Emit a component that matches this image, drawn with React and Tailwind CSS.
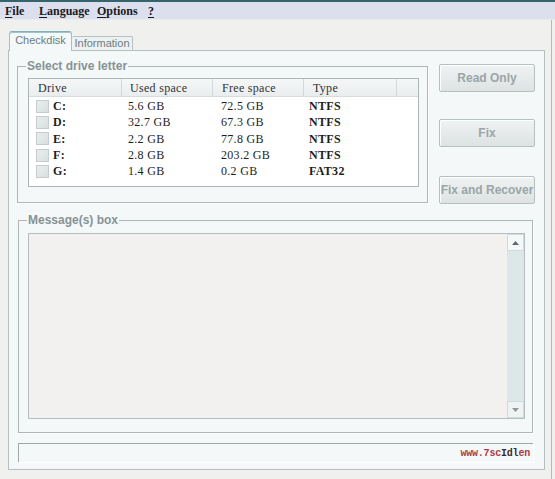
import React from "react";

const drives = [
  { letter: "C:", used: "5.6 GB", free: "72.5 GB", type: "NTFS" },
  { letter: "D:", used: "32.7 GB", free: "67.3 GB", type: "NTFS" },
  { letter: "E:", used: "2.2 GB", free: "77.8 GB", type: "NTFS" },
  { letter: "F:", used: "2.8 GB", free: "203.2 GB", type: "NTFS" },
  { letter: "G:", used: "1.4 GB", free: "0.2 GB", type: "FAT32" },
];

const listFont = { fontFamily: '"Liberation Serif", "Times New Roman", serif' };

function MenuItem({ label, width }) {
  return (
    <span className={`${width} shrink-0`}>
      <span className="underline underline-offset-2">{label[0]}</span>
      {label.slice(1)}
    </span>
  );
}

function ActionButton({ children, className = "" }) {
  return (
    <button
      className={`h-[28px] w-[96px] shrink-0 rounded-[2px] border border-[#b7c0c1] bg-linear-to-b from-[#f0f3f3] to-[#dde2e2] text-[12px] font-bold text-[#9aa6a7] shadow-[inset_1px_1px_0_#ffffff] ${className}`}
    >
      {children}
    </button>
  );
}

function Arrow({ up }) {
  return (
    <svg width="7" height="4" viewBox="0 0 7 4">
      {up ? <path d="M0 4 L3.5 0 L7 4 Z" fill="#5f6b6c" /> : <path d="M0 0 L3.5 4 L7 0 Z" fill="#8d9899" />}
    </svg>
  );
}

export default function App() {
  return (
    <div
      className="flex h-[479px] w-[555px] flex-col overflow-hidden bg-[#f0f0ee]"
      style={{ fontFamily: '"Liberation Sans", Arial, sans-serif' }}
    >
      <div className="h-[2px] shrink-0 bg-[#35646a]" />
      {/* menu bar */}
      <div
        className="flex h-[18px] shrink-0 items-center border-b border-[#e9ebf3] bg-[#dce0ee] pl-[5px] text-[12px] font-bold text-[#1a1a1a]"
        style={listFont}
      >
        <MenuItem label="File" width="w-[34px]" />
        <MenuItem label="Language" width="w-[58px]" />
        <MenuItem label="Options" width="w-[51px]" />
        <MenuItem label="?" width="w-[10px]" />
      </div>

      <div className="flex flex-1">
        <div className="flex w-[551px] flex-col pl-[8px] pt-[11px]">
          {/* tabs */}
          <div className="flex h-[19px] items-end pl-[1px] text-[11px] text-[#6c7c82]">
            <div className="relative z-10 -mb-px flex h-[20px] w-[63px] items-center justify-center rounded-t-[3px] border border-b-0 border-[#b0bcbe] border-t-[#7fb1b8] bg-[#f4f8f8] pb-[2px] shadow-[inset_0_1px_0_#9cc6cc]">
              Checkdisk
            </div>
            <div className="flex h-[14px] w-[61px] items-center justify-center rounded-t-[2px] border border-b-0 border-l-0 border-[#b7c1c2] bg-[#eef1f1]">
              Information
            </div>
          </div>

          {/* tab page */}
          <div className="flex h-[420px] w-[537px] flex-col border border-[#b4bfc0] bg-[#f4f8f8] px-[8px] pt-[8px]">
            <div className="flex">
              <fieldset className="h-[144px] w-[411px] shrink-0 border border-[#aeb7b8] shadow-[1px_1px_0_#ffffff]">
                <legend className="ml-[8px] px-[1px] text-[12px] font-bold leading-[14px] text-[#869394]">
                  Select drive letter
                </legend>
                <div className="pl-[10px] pt-[5px]">
                  {/* drive list */}
                  <div className="h-[109px] w-[391px] border border-[#abb5b6] bg-white">
                    <div
                      className="flex h-[18px] border-b border-[#d6dcdc] bg-linear-to-b from-[#f6f8f8] to-[#e9eded] text-[12px] tracking-[0.3px] text-[#333]"
                      style={listFont}
                    >
                      <div className="flex w-[93px] items-center border-r border-[#d3d9d9] pl-[9px]">Drive</div>
                      <div className="flex w-[91px] items-center border-r border-[#d3d9d9] pl-[8px]">Used space</div>
                      <div className="flex w-[91px] items-center border-r border-[#d3d9d9] pl-[9px]">Free space</div>
                      <div className="flex w-[93px] items-center border-r border-[#d3d9d9] pl-[9px]">Type</div>
                      <div className="flex-1" />
                    </div>
                    <div className="pt-[1px] text-[12px] tracking-[0.3px] text-[#1e1e1e]" style={listFont}>
                      {drives.map((d) => (
                        <div key={d.letter} className="flex h-[16.3px] items-center">
                          <div className="flex w-[93px] items-center pl-[7px]">
                            <span className="h-[13px] w-[13px] border border-[#c5cccd] bg-linear-to-br from-[#e9eded] to-[#d9dfdf]" />
                            <span className="ml-[4px] font-bold">{d.letter}</span>
                          </div>
                          <div className="w-[91px] pl-[6px]">{d.used}</div>
                          <div className="w-[91px] pl-[8px]">{d.free}</div>
                          <div className="w-[93px] pl-[5px] font-bold">{d.type}</div>
                        </div>
                      ))}
                    </div>
                  </div>
                </div>
              </fieldset>

              <div className="ml-[11px] flex flex-col pt-[5px]">
                <ActionButton>Read Only</ActionButton>
                <ActionButton className="mt-[27px]">Fix</ActionButton>
                <ActionButton className="mt-[29px]">Fix and Recover</ActionButton>
              </div>
            </div>

            {/* message area */}
            <fieldset className="ml-[1px] mt-[9px] h-[220px] w-[515px] border border-[#aeb7b8] shadow-[1px_1px_0_#ffffff]">
              <legend className="ml-[8px] px-[1px] text-[12px] font-bold leading-[14px] text-[#869394]">
                Message(s) box
              </legend>
              <div className="pl-[9px] pt-[6px]">
                <div className="flex h-[186px] w-[497px] border border-[#b5bdbe] bg-[#f2f1ef]">
                  <div className="flex-1" />
                  <div className="flex w-[17px] flex-col bg-[#dce7e7]">
                    <div className="flex h-[17px] items-center justify-center border border-[#d0dada] bg-[#f5f8f8]">
                      <Arrow up />
                    </div>
                    <div className="flex-1" />
                    <div className="flex h-[17px] items-center justify-center border border-[#d0dada] bg-[#eef3f3]">
                      <Arrow />
                    </div>
                  </div>
                </div>
              </div>
            </fieldset>

            {/* status field */}
            <div className="ml-[1px] mt-[10px] flex h-[19px] w-[515px] items-center justify-end border-l border-t border-[#9fa8a9] pr-[3px] shadow-[1px_1px_0_#ffffff]">
              <span
                className="text-[10px] font-bold tracking-[-0.2px] text-[#a83a44]"
                style={{ fontFamily: '"Liberation Mono", "Courier New", monospace' }}
              >
                www.7sc
                <span className="text-[#3a2a2a]">Idl</span>
                en
              </span>
            </div>
          </div>
        </div>
        <div className="w-px bg-[#b3babb]" />
      </div>
    </div>
  );
}
